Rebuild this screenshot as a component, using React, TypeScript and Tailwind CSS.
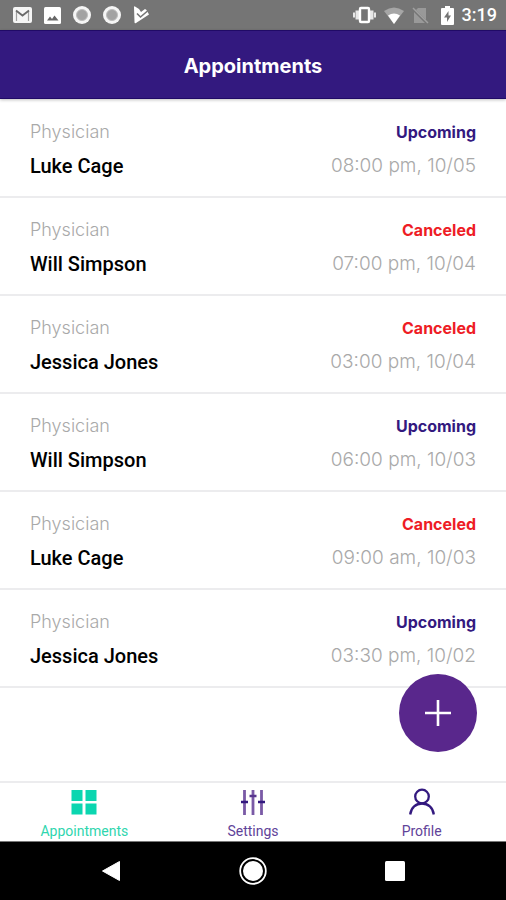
import { useState } from 'react';
import type { ReactNode } from 'react';
import clsx from 'clsx';

type AppointmentStatus = 'Upcoming' | 'Canceled';

interface Appointment {
  physician: string;
  status: AppointmentStatus;
  time: string;
}

const appointments: Appointment[] = [
  { physician: 'Luke Cage', status: 'Upcoming', time: '08:00 pm, 10/05' },
  { physician: 'Will Simpson', status: 'Canceled', time: '07:00 pm, 10/04' },
  { physician: 'Jessica Jones', status: 'Canceled', time: '03:00 pm, 10/04' },
  { physician: 'Will Simpson', status: 'Upcoming', time: '06:00 pm, 10/03' },
  { physician: 'Luke Cage', status: 'Canceled', time: '09:00 am, 10/03' },
  { physician: 'Jessica Jones', status: 'Upcoming', time: '03:30 pm, 10/02' },
];

type TabName = 'Appointments' | 'Settings' | 'Profile';

const tabs: { name: TabName; icon: ReactNode }[] = [
  { name: 'Appointments', icon: <GridIcon /> },
  { name: 'Settings', icon: <SlidersIcon /> },
  { name: 'Profile', icon: <ProfileIcon /> },
];

export default function App() {
  const [activeTab, setActiveTab] = useState<TabName>('Appointments');

  return (
    <div className="flex min-h-screen flex-col bg-white font-['Roboto',sans-serif]">
      <StatusBar />
      <header className="flex h-[69px] shrink-0 items-center justify-center border-y border-[#200a66] bg-[#33197f] pt-0.5 shadow-[0_1px_3px_rgba(0,0,0,0.25)]">
        <h1 className="font-['Inter',sans-serif] text-xl font-bold text-white">Appointments</h1>
      </header>
      <main className="relative flex-1 pt-px">
        <ul>
          {appointments.map((appointment, index) => (
            <AppointmentRow key={index} appointment={appointment} />
          ))}
        </ul>
        <button
          type="button"
          aria-label="Add appointment"
          className="absolute right-[29px] bottom-[29px] flex size-[78px] items-center justify-center rounded-full bg-[#59278c] text-white"
        >
          <svg viewBox="0 0 26 26" className="size-[26px]" stroke="currentColor" strokeWidth="2.6">
            <path d="M13 0v26M0 13h26" />
          </svg>
        </button>
      </main>
      <nav className="grid grid-cols-3 border-t-2 border-[#ececee]">
        {tabs.map(({ name, icon }) => (
          <button
            key={name}
            type="button"
            onClick={() => setActiveTab(name)}
            className={clsx(
              'flex flex-col items-center gap-1 pt-1 text-sm',
              activeTab === name ? 'text-[#2fd6ae]' : 'text-[#5f4399]'
            )}
          >
            {icon}
            <span>{name}</span>
          </button>
        ))}
      </nav>
      <SystemNavigation />
    </div>
  );
}

function AppointmentRow({ appointment }: { appointment: Appointment }) {
  const { physician, status, time } = appointment;

  return (
    <li className="flex justify-between border-b-2 border-[#ececee] px-[30px] pt-[18px] pb-[14px]">
      <div>
        <p className="font-['Inter',sans-serif] text-lg leading-7 font-light text-[#a9a9a9]">
          Physician
        </p>
        <p className="pt-1 text-xl leading-8 font-medium text-black">{physician}</p>
      </div>
      <div className="text-right">
        <p
          className={clsx(
            "font-['Inter',sans-serif] text-base leading-7 font-bold",
            status === 'Upcoming' ? 'text-[#33197f]' : 'text-[#ee1c25]'
          )}
        >
          {status}
        </p>
        <p className="pt-1 font-['Inter',sans-serif] text-[19px] leading-8 font-light text-[#a9a9a9]">
          {time}
        </p>
      </div>
    </li>
  );
}

function StatusBar() {
  return (
    <div className="flex h-[30px] shrink-0 items-center justify-between bg-[#757575] pr-[9px] pl-[13px] text-white">
      <div className="flex items-center gap-3">
        <svg viewBox="0 0 19 16" className="h-4 w-[19px]">
          <rect width="19" height="16" rx="2" fill="#f5f5f5" />
          <path d="M3.5 14V4M15.5 14V4" stroke="#a0a0a0" strokeWidth="1.2" />
          <path d="M3 3.500l6.500 5 6.500-5" fill="none" stroke="#6a6a6a" strokeWidth="1.8" />
        </svg>
        <svg viewBox="0 0 17 17" className="size-[17px]">
          <rect width="17" height="17" rx="1.5" fill="#fff" />
          <path d="M3 13.500l3-4 2 2.500 2.500-3.500 4 5z" fill="#666" />
        </svg>
        <RecordIcon />
        <RecordIcon />
        <svg viewBox="0 0 17 18" className="h-[18px] w-[17px]">
          <path d="M1 1q0-1 1-0.500L6 3l2 3 4-3 1.500 1L16 8.500 3 17q-1.500 1-1.500-1z" fill="#fff" />
          <path d="M4 7.500L7.500 11 14.500 5" fill="none" stroke="#757575" strokeWidth="1.6" />
        </svg>
      </div>
      <div className="flex items-center gap-2">
        <svg viewBox="0 0 23 18" className="h-[18px] w-[23px]" fill="#e8e8e8">
          <path d="M0 6.500h2v5H0zM2.500 4.500H6v9H2.500zM17 4.500h3.500v9H17zM21 6.500h2v5h-2z" />
          <rect x="7" y="2" width="9" height="14" rx="1" fill="none" stroke="#fff" strokeWidth="2.400" />
        </svg>
        <svg viewBox="0 0 20 17" className="h-[17px] w-5">
          <path d="M0 4Q10-3 20 4L10 17z" fill="#a6a6a6" />
          <path d="M4 8.500Q10 4.500 16 8.500L10 17z" fill="#fff" />
        </svg>
        <svg viewBox="0 0 17 17" className="size-[17px]">
          <path d="M6 1h8v12L4 3zM2 5l11 11H2z" fill="#999" />
          <path d="M1 1l15 15" stroke="#a0a0a0" strokeWidth="1.500" />
        </svg>
        <div className="flex items-center gap-2 pl-1">
          <svg viewBox="0 0 13 19" className="h-[19px] w-[13px]">
            <path d="M4 0h5v2h3q1 0 1 1v15q0 1-1 1H1q-1 0-1-1V3q0-1 1-1h3z" fill="#fff" />
            <path d="M7.500 5L3 11.500h3V16l4-6.500H7.500z" fill="#757575" />
          </svg>
          <span className="text-lg font-medium">3:19</span>
        </div>
      </div>
    </div>
  );
}

function RecordIcon() {
  return (
    <svg viewBox="0 0 18 18" className="size-[18px]">
      <circle cx="9" cy="9" r="9" fill="#f5f5f5" />
      <circle cx="9" cy="9" r="5.500" fill="#a3a3a3" stroke="#bdbdbd" />
    </svg>
  );
}

function GridIcon() {
  return (
    <svg viewBox="0 0 26 30" className="h-[30px] w-[26px]" fill="#0bd6b0">
      <path d="M0.500 3h11v11h-11zM14.500 3h11v11h-11zM0.500 16.500h11v11h-11zM14.500 16.500h11v11h-11z" />
    </svg>
  );
}

function SlidersIcon() {
  return (
    <svg viewBox="0 0 26 30" className="h-[30px] w-[26px]" fill="none">
      <path d="M4.500 3v25M13 3v25M21.500 3v25" stroke="#7a5aa6" strokeWidth="2.800" />
      <path d="M1 15h7M18 15h7" stroke="#33197f" strokeWidth="2.500" />
      <path d="M9.500 9h7" stroke="#59378f" strokeWidth="2.500" />
    </svg>
  );
}

function ProfileIcon() {
  return (
    <svg viewBox="0 0 26 30" className="h-[30px] w-[26px]" fill="none" stroke="#33197f" strokeWidth="2.300">
      <circle cx="13" cy="9.500" r="6.800" />
      <path d="M1.200 27.500C2 20.500 7 16.500 13 16.500s11 4 11.800 11" />
    </svg>
  );
}

function SystemNavigation() {
  return (
    <div className="flex h-[59px] shrink-0 items-center justify-center gap-[118px] border-t border-[#777] bg-black">
      <button type="button" aria-label="Back">
        <svg viewBox="0 0 20 22" className="h-[22px] w-5" fill="#fff">
          <path d="M18.500 1.500v19L1.500 11z" stroke="#fff" strokeLinejoin="round" />
        </svg>
      </button>
      <button type="button" aria-label="Home">
        <svg viewBox="0 0 28 28" className="size-7">
          <circle cx="14" cy="14" r="12.800" fill="none" stroke="#fff" strokeWidth="1.800" />
          <circle cx="14" cy="14" r="10" fill="#fff" />
        </svg>
      </button>
      <button type="button" aria-label="Recent apps">
        <svg viewBox="0 0 20 20" className="size-5">
          <rect width="20" height="20" rx="1.500" fill="#fff" />
        </svg>
      </button>
    </div>
  );
}
